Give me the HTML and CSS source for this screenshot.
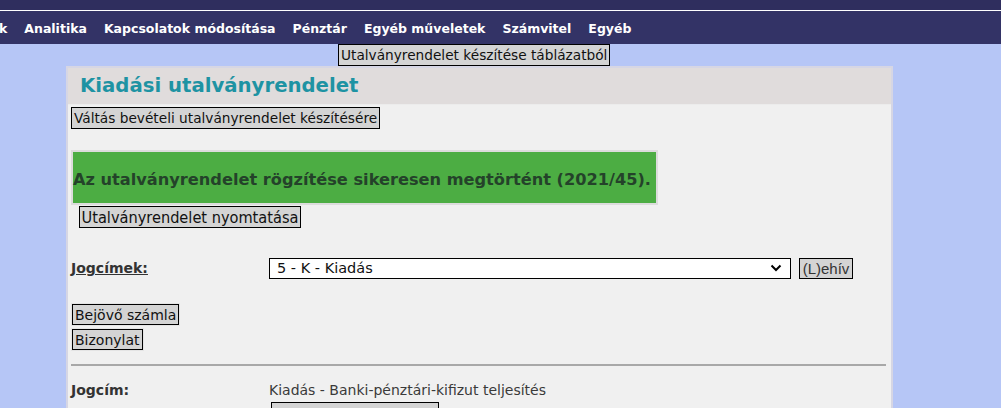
FILE: index.html
```html
<!DOCTYPE html>
<html lang="hu">
<head>
<meta charset="utf-8">
<title>Kiadási utalványrendelet</title>
<link rel="stylesheet" href="styles.css">
</head>
<body>
<header class="top">
  <div class="strip"></div>
  <nav class="menu">
    <a class="item cut">k</a>
    <a class="item">Analitika</a>
    <a class="item">Kapcsolatok módosítása</a>
    <a class="item">Pénztár</a>
    <a class="item">Egyéb műveletek</a>
    <a class="item">Számvitel</a>
    <a class="item">Egyéb</a>
  </nav>
</header>
<div class="toolbar">
  <button class="btn btn-wide">Utalványrendelet készítése táblázatból</button>
</div>
<main class="panel">
  <h1 class="panel-title">Kiadási utalványrendelet</h1>
  <div class="panel-body">
    <button class="btn">Váltás bevételi utalványrendelet készítésére</button>
    <div class="success">Az utalványrendelet rögzítése sikeresen megtörtént (2021/45).</div>
    <button class="btn btn-cond">Utalványrendelet nyomtatása</button>
    <div class="row row-jog">
      <span class="label"><u>Jogcímek:</u></span>
      <div class="select"><span>5 - K - Kiadás</span>
        <svg class="chev" width="12" height="8" viewBox="0 0 12 8"><path d="M1.5 1.5 L6 6 L10.5 1.5" fill="none" stroke="#000" stroke-width="2"/></svg>
      </div>
      <button class="btn btn-arial">(L)ehív</button>
    </div>
    <div class="stack">
      <span class="btn-wrap"><button class="btn">Bejövő számla</button></span>
      <span class="btn-wrap"><button class="btn">Bizonylat</button></span>
    </div>
    <hr class="sep">
    <div class="row row-info">
      <span class="label">Jogcím:</span>
      <span class="value">Kiadás - Banki-pénztári-kifizut teljesítés</span>
    </div>
    <div class="row row-box">
      <span class="label"></span>
      <div class="box"></div>
    </div>
  </div>
</main>
</body>
</html>
```
FILE: styles.css
```css
html, body {
  margin: 0;
  padding: 0;
}
body {
  background: #b6c6f6;
  font-family: "DejaVu Sans", Verdana, sans-serif;
  font-size: 13px;
  color: #222;
  overflow: hidden;
  height: 408px;
}
.top {
  background: #333366;
}
.strip {
  height: 10px;
  background: #2f2e5e;
  border-bottom: 1px solid #ffffff;
}
.menu {
  display: flex;
  align-items: center;
  height: 33px;
  margin-left: -1px;
}
.item {
  color: #fff;
  font-weight: bold;
  font-size: 12.5px;
  margin-right: 17px;
  white-space: nowrap;
  padding-top: 1px;
}
.toolbar {
  display: flex;
  padding-left: 338px;
  height: 22px;
}
.btn {
  font-family: "DejaVu Sans", Verdana, sans-serif;
  font-size: 13.7px;
  color: #111;
  background: #d4d4d4;
  border: 1px solid #000;
  border-radius: 0;
  padding: 0 2px;
  height: 22px;
  line-height: 19px;
  margin: 0;
  white-space: nowrap;
}
.btn-wide {
  width: 272px;
}
.panel {
  margin-left: 66px;
  width: 823px;
  border: 2px solid #d6d6e4;
  border-bottom: 0;
  background: #f0f0f0;
  height: 400px;
}
.panel-title {
  margin: 0;
  background: #e0dcdc;
  color: #1e93a3;
  font-size: 19.7px;
  font-weight: bold;
  height: 36px;
  line-height: 36px;
  padding-left: 12px;
  border-bottom: 1px solid #ececec;
}
.panel-body {
  padding: 2px 3px 0 3px;
  display: flex;
  flex-direction: column;
  align-items: flex-start;
}
.success {
  margin-top: 21px;
  width: 583px;
  height: 48px;
  background: #4cad43;
  border: 2px solid #dcdcdc;
  color: #24422a;
  font-weight: bold;
  font-size: 16.2px;
  padding-left: 0;
  padding-top: 3px;
  display: flex;
  align-items: center;
  white-space: nowrap;
}
.btn-cond {
  font-family: "DejaVu Sans Condensed", "DejaVu Sans", sans-serif;
  font-stretch: condensed;
  font-size: 16.2px;
  margin-left: 8px;
  margin-top: 1px;
  width: 222px;
  padding: 0 1px;
}
.row {
  display: flex;
  align-items: center;
}
.label {
  width: 198px;
  font-weight: bold;
  color: #333;
  font-size: 14px;
}
.row-jog {
  margin-top: 29px;
  height: 22px;
}
.select {
  width: 522px;
  height: 21px;
  border: 1px solid #000;
  background: #fff;
  display: flex;
  align-items: center;
  justify-content: space-between;
  padding: 0 8px 0 7px;
  box-sizing: border-box;
  font-size: 14.5px;
  color: #111;
}
.chev {
  display: block;
}
.btn-arial {
  font-family: "Liberation Sans", Arial, sans-serif;
  font-size: 15px;
  color: #333;
  margin-left: 8px;
  height: 21px;
  width: 54px;
  padding: 0 1px;
}
.stack {
  margin-top: 24px;
  display: flex;
  flex-direction: column;
  gap: 2px;
}
.btn-wrap {
  display: inline-flex;
  align-self: flex-start;
  border: 1px solid #e4e4e4;
}
.stack .btn {
  font-size: 14px;
  height: 21px;
  line-height: 18px;
}
.sep {
  align-self: stretch;
  margin: 13px 2px 0 0;
  border: 0;
  border-top: 2px solid #a8a8a8;
  height: 0;
}
.row-info {
  margin-top: 16px;
}
.value {
  font-size: 14px;
  color: #3a3a3a;
}
.row-box {
  margin-top: 4px;
}
.box {
  margin-left: 2px;
  width: 166px;
  height: 22px;
  border: 1px solid #000;
  background: #d4d4d4;
}
```
